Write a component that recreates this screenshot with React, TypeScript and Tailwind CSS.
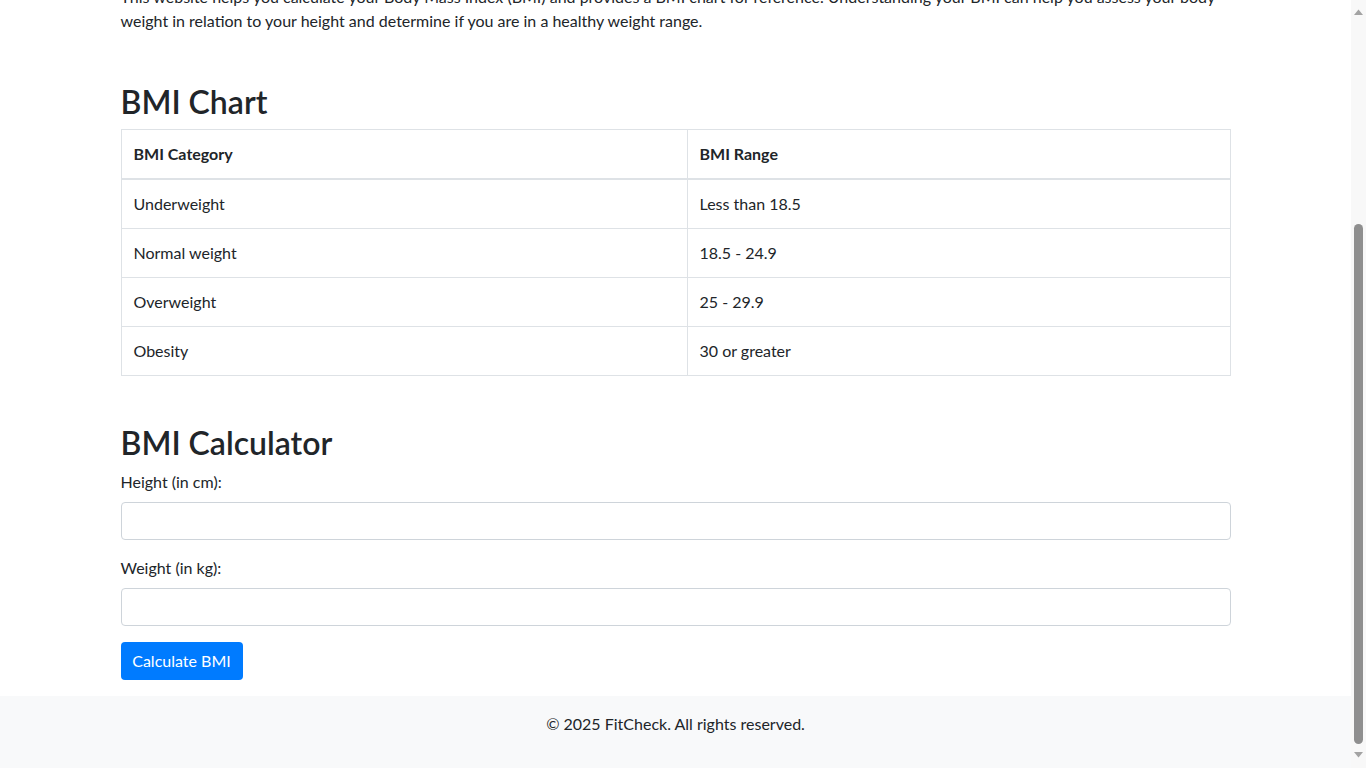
import { useLayoutEffect, useRef } from "react";

const ROWS = [
  ["Underweight", "Less than 18.5"],
  ["Normal weight", "18.5 - 24.9"],
  ["Overweight", "25 - 29.9"],
  ["Obesity", "30 or greater"],
];

function Arrow({ down }: { down?: boolean }) {
  return (
    <svg width="9" height="6" viewBox="0 0 9 6" className="block">
      <path d={down ? "M0 0H9L4.5 5.5Z" : "M0 6H9L4.5 0.5Z"} fill="#a3a3a3" />
    </svg>
  );
}

export default function App() {
  const scroller = useRef<HTMLDivElement>(null);

  // the reference is photographed scrolled to the very bottom
  useLayoutEffect(() => {
    const el = scroller.current;
    if (el) el.scrollTop = el.scrollHeight;
  }, []);

  return (
    <div className="flex h-screen bg-white font-['Lato','Noto_Sans',sans-serif] text-base leading-6 text-[#212529]">
      <div ref={scroller} className="min-w-0 flex-1 overflow-y-auto [scrollbar-width:none]">
        <nav className="flex h-[56px] items-center bg-[#343a40] px-4">
          <span className="mx-auto w-[1110px] text-xl text-white">FitCheck</span>
        </nav>

        <main className="mx-auto w-[1110px]">
          <section className="pt-[48px]">
            <h1 className="mb-2 text-[40px] font-semibold leading-[48px]">Welcome to FitCheck</h1>
            <p className="mb-[161px] text-xl">Your personal Body Mass Index companion.</p>
            <p>
              This website helps you calculate your Body Mass Index (BMI) and provides a BMI chart for reference. Understanding your BMI can help you assess your body
              <br />
              weight in relation to your height and determine if you are in a healthy weight range.
            </p>
          </section>

          <section className="mt-[50px]">
            <h2 className="mb-2 text-[32px] font-semibold leading-[38px]">BMI Chart</h2>
            <table className="w-full border-collapse border border-[#dee2e6] text-left">
              <thead>
                <tr>
                  <th className="w-[566px] border border-b-2 border-[#dee2e6] p-3 font-bold">BMI Category</th>
                  <th className="border border-b-2 border-[#dee2e6] p-3 font-bold">BMI Range</th>
                </tr>
              </thead>
              <tbody>
                {ROWS.map(([cat, range]) => (
                  <tr key={cat}>
                    <td className="border border-[#dee2e6] p-3">{cat}</td>
                    <td className="border border-[#dee2e6] p-3">{range}</td>
                  </tr>
                ))}
              </tbody>
            </table>
          </section>

          <section className="mt-[48px] pb-4">
            <h2 className="mb-2 text-[32px] font-semibold leading-[38px]">BMI Calculator</h2>
            <div className="mb-4">
              <label className="mb-2 block">Height (in cm):</label>
              <input type="number" className="block h-[38px] w-full rounded border border-[#ced4da] px-3" />
            </div>
            <div className="mb-4">
              <label className="mb-2 block">Weight (in kg):</label>
              <input type="number" className="block h-[38px] w-full rounded border border-[#ced4da] px-3" />
            </div>
            <button className="h-[38px] w-[122px] rounded bg-[#007bff] text-white">Calculate BMI</button>
          </section>
        </main>

        <footer className="bg-[#f8f9fa] pt-4 pb-8 text-center">
          <p>© 2025 FitCheck. All rights reserved.</p>
        </footer>
      </div>

      {/* window scrollbar, thumb resting at the bottom */}
      <div className="flex w-[15px] shrink-0 flex-col items-center bg-[#f8f8f8]">
        <div className="mt-[9px]">
          <Arrow />
        </div>
        <div className="flex-1" />
        <div className="h-[520px] w-[9px] rounded-[5px] bg-[#8f8f8f]" />
        <div className="mt-[8px] mb-[10px]">
          <Arrow down />
        </div>
      </div>
    </div>
  );
}
